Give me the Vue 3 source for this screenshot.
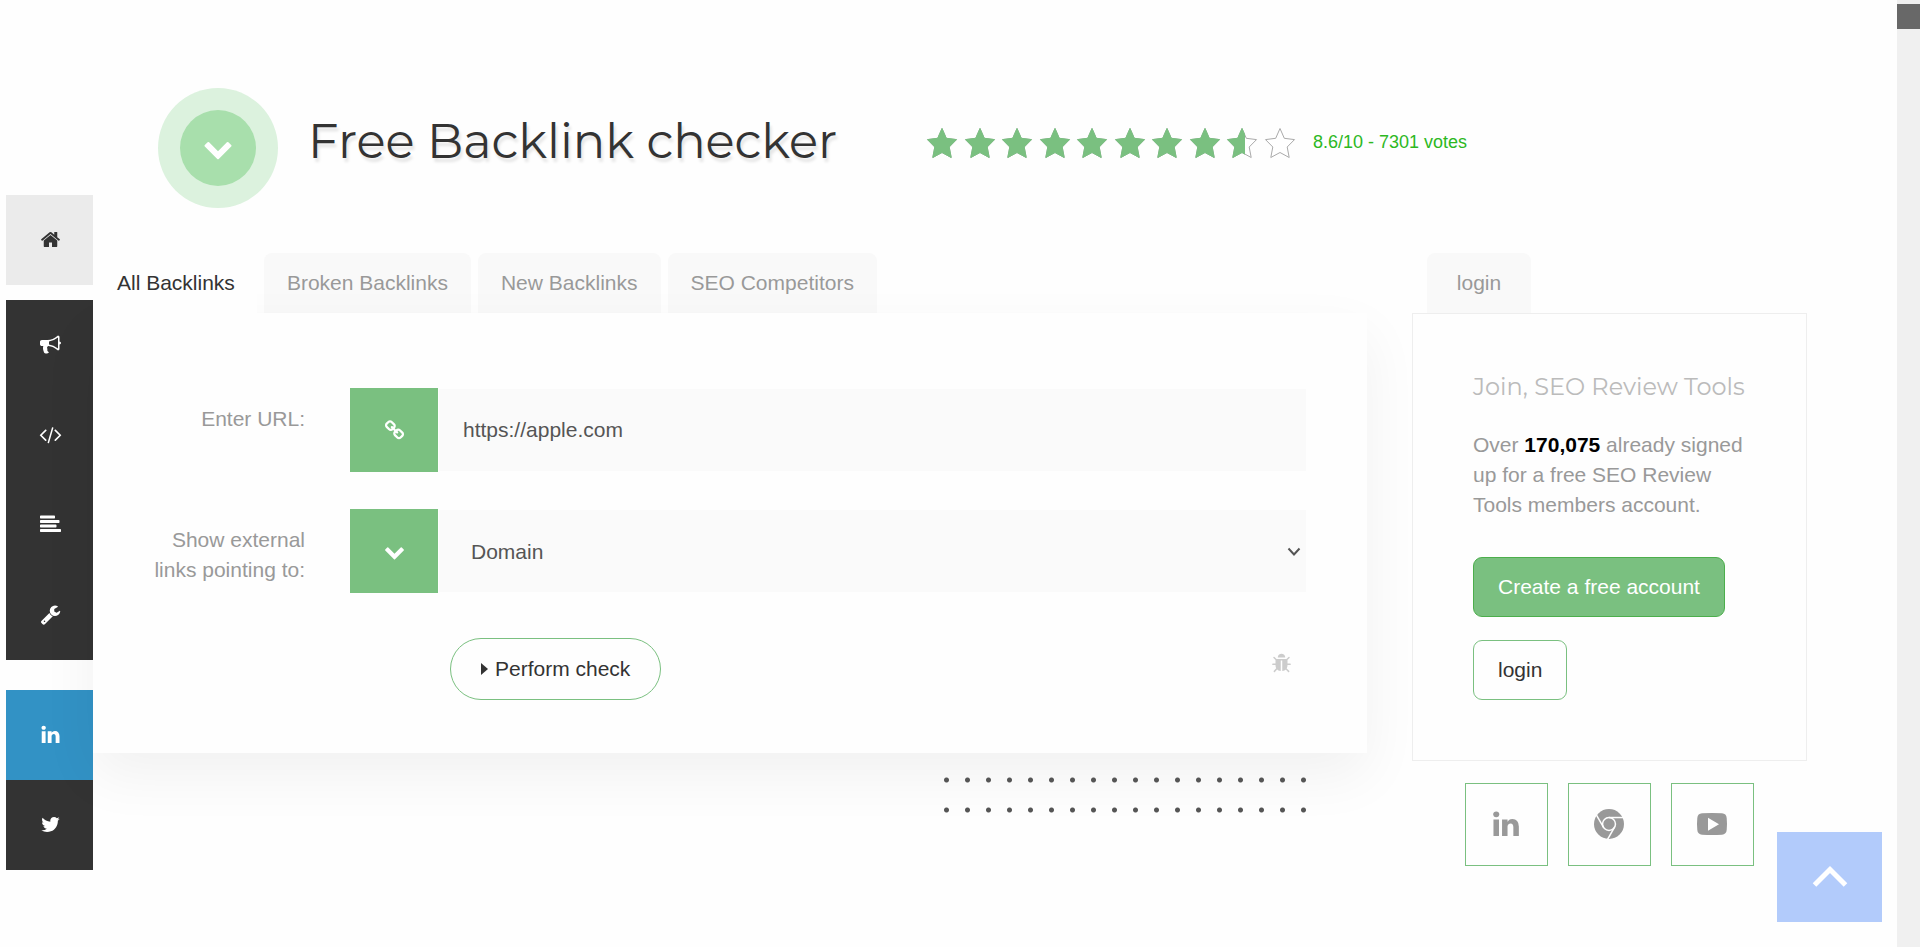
<template>
  <div class="page">
    <nav class="sidebar" aria-label="Main menu">
      <a
        v-for="item in menu"
        :key="item.name"
        href="#"
        class="side-link"
        :class="item.name"
        :aria-label="item.label"
      >
        <svg class="icon" viewBox="0 0 1792 1792"><path :d="icons[item.name]" /></svg>
      </a>
    </nav>

    <div class="content">
      <header class="header">
        <div class="badge">
          <div class="badge-inner">
            <svg class="icon-big" viewBox="0 0 1792 1792"><path :d="icons.chevron" /></svg>
          </div>
        </div>
        <h1 class="title">Free Backlink checker</h1>
        <div class="rating">
          <div class="stars">
            <svg v-for="n in 10" :key="n" class="star" viewBox="0 0 30 30">
              <defs>
                <clipPath :id="'star-' + n">
                  <rect x="0" y="0" :width="starWidth(n)" height="30" />
                </clipPath>
              </defs>
              <polygon class="star-line" :points="starPoints" />
              <polygon class="star-fill" :points="starPoints" :clip-path="'url(#star-' + n + ')'" />
            </svg>
          </div>
          <span class="votes">{{ score }}/10 - {{ votes }} votes</span>
        </div>
      </header>

      <div class="columns">
        <main class="main">
          <div class="tabs">
            <button
              v-for="tab in tabs"
              :key="tab"
              type="button"
              class="tab"
              :class="{ active: tab === activeTab }"
              @click="activeTab = tab"
            >{{ tab }}</button>
          </div>

          <form class="card" @submit.prevent>
            <div class="row">
              <label class="label" for="url">Enter URL:</label>
              <div class="field">
                <span class="addon">
                  <svg class="icon" viewBox="0 0 1792 1792"><path :d="icons.link" /></svg>
                </span>
                <input id="url" v-model="url" class="control" type="text" />
              </div>
            </div>
            <div class="row">
              <label class="label" for="mode">Show external links pointing to:</label>
              <div class="field">
                <span class="addon">
                  <svg class="icon" viewBox="0 0 1792 1792"><path :d="icons.chevron" /></svg>
                </span>
                <select id="mode" v-model="mode" class="control select">
                  <option>Domain</option>
                  <option>URL</option>
                </select>
                <svg class="arrow" viewBox="0 0 14 10"><path d="M1.500 1.500L7 7.500L12.500 1.500" /></svg>
              </div>
            </div>
            <div class="actions">
              <button class="check" type="submit">
                <svg class="caret" viewBox="0 0 7 12"><path d="M0 0L7 6L0 12z" /></svg>
                Perform check
              </button>
              <a href="#" class="bug" aria-label="Report a bug">
                <svg class="icon" viewBox="0 0 1792 1792"><path :d="icons.bug" /></svg>
              </a>
            </div>
          </form>

          <div class="dots"></div>
        </main>

        <aside class="aside">
          <button type="button" class="tab login-tab">login</button>
          <section class="panel">
            <h2 class="panel-title">Join, SEO Review Tools</h2>
            <p class="panel-text">Over <strong>170,075</strong> already signed up for a free SEO Review Tools members account.</p>
            <a href="#" class="btn btn-green">Create a free account</a>
            <a href="#" class="btn">login</a>
          </section>
          <div class="socials">
            <a href="#" class="social" aria-label="LinkedIn">
              <svg class="icon-big" viewBox="0 0 1792 1792"><path :d="icons.linkedin" /></svg>
            </a>
            <a href="#" class="social" aria-label="Chrome extension">
              <svg class="icon-big chrome" viewBox="0 0 32 32">
                <circle cx="16" cy="16" r="16" />
                <circle class="gap" cx="16" cy="16" r="6.9" />
                <path class="gap" d="M16 9.1H32" />
                <path class="gap" d="M16 9.1H32" transform="rotate(120 16 16)" />
                <path class="gap" d="M16 9.1H32" transform="rotate(240 16 16)" />
              </svg>
            </a>
            <a href="#" class="social" aria-label="YouTube">
              <svg class="icon-big" viewBox="0 0 30 30">
                <path fill-rule="evenodd" d="M5 4.300Q15 3.700 25 4.300Q29.300 4.600 29.700 9Q30.300 15 29.700 21Q29.300 25.400 25 25.700Q15 26.300 5 25.700Q0.700 25.400 0.300 21Q-0.300 15 0.300 9Q0.700 4.600 5 4.300zM11 8.700V21.700L22 15.200z" />
              </svg>
            </a>
          </div>
        </aside>
      </div>
    </div>

    <div class="scrollbar"><div class="thumb"></div></div>

    <a href="#" class="to-top" aria-label="Back to top">
      <svg class="up" viewBox="0 0 36 22"><path d="M2.500 19L18 3.500L33.500 19" /></svg>
    </a>
  </div>
</template>

<script setup>
import { ref } from "vue";

const score = 8.6
const votes = 7301

const tabs = ["All Backlinks", "Broken Backlinks", "New Backlinks", "SEO Competitors"]
const activeTab = ref("All Backlinks")

const url = ref("https://apple.com")
const mode = ref("Domain")

const menu = [
  { name: "home", label: "Home" },
  { name: "bullhorn", label: "Marketing tools" },
  { name: "code", label: "Technical tools" },
  { name: "lines", label: "Content tools" },
  { name: "wrench", label: "Other tools" },
  { name: "linkedin", label: "LinkedIn" },
  { name: "twitter", label: "Twitter" },
]

const starPoints = "15,0.5 19.3,10.3 29.5,11.6 22.2,19 24.2,29.500 15,24.500 5.800,29.500 7.800,19 0.5,11.6 10.7,10.3"

// width of the green part of star n, a full star is 30 wide
const starWidth = (n) => Math.round(Math.max(0, Math.min(1, score - n + 1)) * 30)

const icons = {
  home: "M1472 992v480q0 26-19 45t-45 19h-384v-384h-256v384h-384q-26 0-45-19t-19-45v-480q0-1 .5-3t.5-3l575-474 575 474q1 2 1 6zm223-69l-62 74q-8 9-21 11h-3q-13 0-21-7l-692-577-692 577q-12 8-24 7-13-2-21-11l-62-74q-8-10-7-23.5t11-21.5l719-599q32-26 76-26t76 26l244 204v-195q0-14 9-23t23-9h192q14 0 23 9t9 23v408l219 182q10 8 11 21.5t-7 23.5z",
  bullhorn: "M1664 640q53 0 90.5 37.5t37.5 90.5-37.5 90.5-90.5 37.5v384q0 52-38 90t-90 38q-417-347-812-380-58 19-91 66t-31 100.5 40 92.5q-20 33-23 65.5t6 58 33.5 55 48 50 61.5 50.5q-29 58-111.5 83t-168.5 11.5-132-55.5q-7-23-29.5-87.5t-32-94.5-23-89-15-101 3.5-98.5 22-110.5h-122q-66 0-113-47t-47-113v-192q0-66 47-113t113-47h480q435 0 896-384 52 0 90 38t38 90v384zm-128 604v-954q-394 302-768 343v270q377 42 768 341z",
  code: "M553 1399l-50 50q-10 10-23 10t-23-10l-466-466q-10-10-10-23t10-23l466-466q10-10 23-10t23 10l50 50q10 10 10 23t-10 23l-393 393 393 393q10 10 10 23t-10 23zm591-1067l-373 1291q-4 13-15.5 19.5t-23.5 2.5l-62-17q-13-4-19.5-15.5t-2.5-24.5l373-1291q4-13 15.5-19.5t23.5-2.5l62 17q13 4 19.5 15.5t2.5 24.5zm657 651l-466 466q-10 10-23 10t-23-10l-50-50q-10-10-10-23t10-23l393-393-393-393q-10-10-10-23t10-23l50-50q10-10 23-10t23 10l466 466q10 10 10 23t-10 23z",
  lines: "M1792 1344v128q0 26-19 45t-45 19h-1664q-26 0-45-19t-19-45v-128q0-26 19-45t45-19h1664q26 0 45 19t19 45zm-384-384v128q0 26-19 45t-45 19h-1280q-26 0-45-19t-19-45v-128q0-26 19-45t45-19h1280q26 0 45 19t19 45zm256-384v128q0 26-19 45t-45 19h-1536q-26 0-45-19t-19-45v-128q0-26 19-45t45-19h1536q26 0 45 19t19 45zm-384-384v128q0 26-19 45t-45 19h-1152q-26 0-45-19t-19-45v-128q0-26 19-45t45-19h1152q26 0 45 19t19 45z",
  wrench: "M448 1472q0-26-19-45t-45-19-45 19-19 45 19 45 45 19 45-19 19-45zm644-420l-682 682q-37 37-90 37-52 0-91-37l-106-108q-38-36-38-90 0-53 38-91l681-681q39 98 114.5 173.5t173.5 114.5zm634-435q0 39-23 106-47 134-164.5 217.5t-258.5 83.5q-185 0-316.5-131.5t-131.5-316.5 131.5-316.5 316.5-131.5q58 0 121.5 16.5t107.5 46.5q16 11 16 28t-16 28l-293 169v224l193 107q5-3 79-48.5t135.5-81 70.5-35.5q15 0 23.5 10t8.5 25z",
  linkedin: "M477 625v991h-330v-991h330zm21-306q1 73-50.5 122t-135.5 49h-2q-82 0-132-49t-50-122q0-74 51.5-122.5t134.5-48.5 133 48.5 51 122.5zm1166 729v568h-329v-530q0-105-40.5-164.5t-126.5-59.5q-63 0-105.5 34.5t-63.5 85.5q-11 30-11 81v553h-329q2-399 2-647t-1-296l-1-48h329v144h-2q20-32 41-56t56.5-52 87-43.5 114.5-15.5q171 0 275 113.5t104 332.5z",
  twitter: "M1684 408q-67 98-162 167 1 14 1 42 0 130-38 259.5t-115.5 248.5-184.5 210.5-258 146-323 54.5q-271 0-496-145 35 4 78 4 225 0 401-138-105-2-188-64.5t-114-159.5q33 5 61 5 43 0 85-11-112-23-185.5-111.5t-73.5-205.5v-4q68 38 146 41-66-44-105-115t-39-154q0-88 44-163 121 149 294.5 238.5t371.5 99.5q-8-38-8-74 0-134 94.5-228.5t228.5-94.5q140 0 236 102 109-21 205-78-37 115-142 178 93-10 186-50z",
  chevron: "M1683 808l-742 741q-19 19-45 19t-45-19l-742-741q-19-19-19-45.5t19-45.5l166-165q19-19 45-19t45 19l531 531 531-531q19-19 45-19t45 19l166 165q19 19 19 45.5t-19 45.5z",
  link: "M1520 1216q0-40-28-68l-208-208q-28-28-68-28-42 0-72 32 3 3 19 18.5t21.5 21.5 15 19 13 25.5 3.5 27.5q0 40-28 68t-68 28q-15 0-27.5-3.5t-25.5-13-19-15-21.5-21.5-18.5-19q-33 31-33 73 0 40 28 68l206 207q27 27 68 27 40 0 68-26l147-146q28-28 28-67zm-703-705q0-40-28-68l-206-207q-28-28-68-28-39 0-68 27l-147 146q-28 28-28 67 0 40 28 68l208 208q27 27 68 27 42 0 72-31-3-3-19-18.5t-21.5-21.5-15-19-13-25.5-3.5-27.5q0-40 28-68t68-28q15 0 27.5 3.5t25.5 13 19 15 21.5 21.5 18.5 19q33-31 33-73zm895 705q0 120-85 203l-147 146q-83 83-203 83-121 0-204-85l-206-207q-83-83-83-203 0-123 88-209l-88-88q-86 88-208 88-120 0-204-84l-208-208q-84-84-84-204t85-203l147-146q83-83 203-83 121 0 204 85l206 207q83 83 83 203 0 123-88 209l88 88q86-88 208-88 120 0 204 84l208 208q84 84 84 204z",
  bug: "M1696 960q0 26-19 45t-45 19h-224q0 171-67 290l208 209q19 19 19 45t-19 45q-18 19-45 19t-45-19l-198-197q-5 5-15 13t-42 28.5-65 36.5-82 29-97 13v-896h-128v896q-51 0-101.5-13.5t-87-33-66-39-43.5-32.5l-15-14-183 207q-20 21-48 21-24 0-43-16-19-18-20.5-44.5t15.5-46.5l202-227q-58-114-58-274h-224q-26 0-45-19t-19-45 19-45 45-19h224v-294l-173-173q-19-19-19-45t19-45 45-19 45 19l173 173h844l173-173q19-19 45-19t45 19 19 45-19 45l-173 173v294h224q26 0 45 19t19 45zm-480-576h-640q0-133 93.5-226.5t226.5-93.5 226.5 93.5 93.5 226.5z",
}
</script>

<style>
body {
  margin: 0;
  background: #fefefe;
}
</style>

<style scoped>
.page {
  display: flex;
  min-height: 100vh;
  font-family: "Liberation Sans", Arial, sans-serif;
  font-size: 21px;
  line-height: 30px;
  color: #999;
}

.page * {
  box-sizing: border-box;
}

a {
  text-decoration: none;
}

button,
input,
select {
  font: inherit;
}

svg {
  display: block;
  fill: currentColor;
  overflow: visible;
}

.icon {
  width: 21px;
  height: 21px;
}

.icon-big {
  width: 30px;
  height: 30px;
}

/* left menu */
.sidebar {
  width: 87px;
  flex: none;
  margin-left: 6px;
  padding-top: 195px;
}

.side-link {
  display: flex;
  align-items: center;
  justify-content: center;
  height: 90px;
  padding: 0 0 2px 2px;
  background: #333;
  color: #fff;
}

.side-link.home {
  margin-bottom: 15px;
  background: #ebebeb;
  color: #333;
}

.side-link.linkedin {
  margin-top: 30px;
  background: #3292c5;
}

.content {
  flex: 1;
  min-width: 0;
  padding-top: 88px;
}

/* header */
.header {
  display: flex;
  padding-left: 65px;
  margin-bottom: 45px;
}

.badge {
  display: flex;
  align-items: center;
  justify-content: center;
  flex: none;
  width: 120px;
  height: 120px;
  border-radius: 50%;
  background: #dcf2de;
}

.badge-inner {
  display: flex;
  align-items: center;
  justify-content: center;
  width: 76px;
  height: 76px;
  border-radius: 50%;
  background: #a8dfac;
  color: #fff;
}

.title {
  width: 649px;
  margin: 0;
  padding: 23px 0 0 30px;
  font-family: Montserrat, Inter, sans-serif;
  font-size: 48px;
  font-weight: 400;
  line-height: 60px;
  color: #333;
  text-shadow: 2px 4px 3px rgba(0, 0, 0, 0.1);
}

.rating {
  display: flex;
  align-items: center;
  gap: 18px;
  height: 110px;
}

.stars {
  display: flex;
  justify-content: space-between;
  width: 368px;
}

.star {
  width: 30px;
  height: 30px;
}

.star-line {
  fill: #fff;
  stroke: #aaa;
}

.star-fill {
  fill: #7ac080;
  stroke: #7ac080;
}

.votes {
  padding-bottom: 2px;
  font-size: 18px;
  color: #2db81f;
}

/* tabs and form */
.columns {
  display: flex;
  gap: 45px;
  padding-right: 90px;
}

.main {
  flex: 1;
  min-width: 0;
}

.tabs {
  display: flex;
  gap: 7px;
}

.tab {
  height: 60px;
  padding: 0 23px;
  border: 0;
  border-radius: 8px 8px 0 0;
  background: #f9f9f9;
  color: #999;
  cursor: pointer;
}

.tab.active {
  position: relative;
  z-index: 2;
  padding: 0 22px 0 24px;
  background: #fefefe;
  color: #333;
}

.card {
  position: relative;
  z-index: 1;
  padding: 75px 60px 53px;
  background: #fefefe;
  box-shadow: 0 22px 54px rgba(0, 0, 0, 0.055);
}

.row {
  display: flex;
  gap: 45px;
  margin-bottom: 37px;
}

.label {
  flex: none;
  width: 152px;
  padding-top: 16px;
  text-align: right;
}

.field {
  position: relative;
  display: flex;
  flex: 1;
  height: 84px;
}

.addon {
  display: flex;
  align-items: center;
  justify-content: center;
  flex: none;
  width: 88px;
  background: #7ac080;
  color: #fff;
}

.control {
  flex: 1;
  min-width: 0;
  padding: 0 24px;
  border: 1px solid #fefefe;
  border-radius: 0;
  background: #fafafa;
  color: #555;
}

.select {
  padding: 2px 0 0 32px;
  appearance: none;
}

/* drop-down arrow over the select */
.arrow {
  position: absolute;
  top: 38px;
  right: 6px;
  width: 14px;
  height: 10px;
  fill: none;
  stroke: #555;
  stroke-width: 2;
  pointer-events: none;
}

.actions {
  display: flex;
  justify-content: space-between;
  padding: 8px 15px 0 297px;
}

.check {
  display: flex;
  align-items: center;
  gap: 7px;
  height: 62px;
  padding: 0 30px;
  border: 1px solid #7ac080;
  border-radius: 31px;
  background: #fefefe;
  color: #333;
  cursor: pointer;
}

.caret {
  width: 7px;
  height: 12px;
}

.bug {
  padding-top: 15px;
  color: #ccc;
}

.dots {
  position: relative;
  z-index: 1;
  width: 386px;
  height: 60px;
  margin: 12px 45px 0 auto;
  background: radial-gradient(circle, #555 2px, transparent 3px) 0 0 / 21px 30px;
}

/* right column */
.aside {
  position: relative;
  z-index: 2;
  width: 395px;
  flex: none;
}

.login-tab {
  display: block;
  width: 104px;
  margin-left: 15px;
}

.panel {
  display: flex;
  flex-direction: column;
  align-items: flex-start;
  padding: 60px 60px;
  border: 1px solid #eee;
  background: #fefefe;
}

.panel-title {
  margin: 0 0 30px;
  font-family: Montserrat, Inter, sans-serif;
  font-size: 24px;
  font-weight: 400;
  line-height: 26px;
  color: #bbb;
  white-space: nowrap;
}

.panel-text {
  margin: 0 0 37px;
}

.panel-text strong {
  color: #000;
}

.btn {
  height: 60px;
  padding: 14px 24px;
  border: 1px solid #7ac080;
  border-radius: 9px;
  color: #333;
}

.btn-green {
  margin-bottom: 23px;
  border-color: #4cae4c;
  background: #7ac080;
  color: #fff;
}

.socials {
  display: flex;
  gap: 20px;
  margin: 22px 0 0 53px;
}

.social {
  display: flex;
  align-items: center;
  justify-content: center;
  width: 83px;
  height: 83px;
  padding: 0 2px 2px 0;
  border: 1px solid #7ac080;
  color: #999;
}

.chrome .gap {
  fill: none;
  stroke: #fefefe;
  stroke-width: 1.6;
}

.scrollbar {
  flex: none;
  width: 23px;
  padding-top: 4px;
  background: #f0f0f0;
}

.thumb {
  height: 25px;
  background: #686868;
}

.to-top {
  position: fixed;
  right: 38px;
  bottom: 25px;
  z-index: 3;
  display: flex;
  align-items: center;
  justify-content: center;
  width: 105px;
  height: 90px;
  background: #b2cbfb;
}

.up {
  width: 36px;
  height: 22px;
  fill: none;
  stroke: #fff;
  stroke-width: 5;
}
</style>
